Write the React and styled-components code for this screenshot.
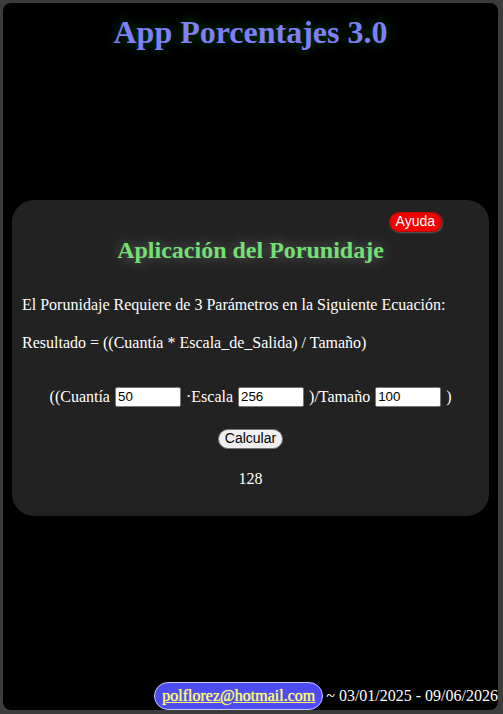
import React, { useState } from 'react';
import styled, { createGlobalStyle } from 'styled-components';

const GlobalStyle = createGlobalStyle`
  html, body {
    margin: 0;
    padding: 0;
    height: 100%;
    background: #3b3b3b;
  }
  body {
    font-family: "Liberation Serif", "Times New Roman", serif;
    color: #fff;
  }
`;

const Screen = styled.div`
  margin: 3px 5px 4px 3px;
  height: calc(100vh - 7px);
  background: #000;
  border-radius: 8px;
  display: grid;
  grid-template-rows: auto 1fr auto;
  overflow: hidden;
`;

const AppTitle = styled.h1`
  margin: 11px 0 0;
  text-align: center;
  font-size: 32px;
  line-height: 37px;
  font-weight: bold;
  color: #7f7ff7;
  text-shadow: 0 0 12px rgba(0, 140, 0, 0.55);
`;

const Main = styled.main`
  display: flex;
  align-items: center;
  padding: 0 9px 18px;
`;

const Card = styled.section`
  flex: 1;
  background: #222;
  border-radius: 22px;
  padding: 12px 10px 27px;
  text-align: center;
`;

const TopBar = styled.div`
  display: flex;
  justify-content: flex-end;
  padding-right: 37px;
  height: 20px;
`;

const HelpButton = styled.button`
  background: #f00000;
  color: #fff;
  border: 1px solid #b00;
  border-radius: 10px;
  font-family: "Liberation Sans", Arial, sans-serif;
  font-size: 14px;
  line-height: 17px;
  padding: 0 6px;
  height: 20px;
  box-shadow: 1px 1px 2px rgba(255, 255, 255, 0.25);
  cursor: pointer;
`;

const CardHeading = styled.h2`
  margin: 4px 0 0;
  font-size: 24px;
  line-height: 28px;
  font-weight: bold;
  color: #74e074;
  text-shadow: 0 0 14px rgba(255, 255, 255, 0.35);
`;

const Text = styled.p`
  margin: ${(p) => p.$top}px 0 0;
  text-align: left;
  font-size: 16px;
  line-height: 20px;
`;

const FormulaRow = styled.div`
  margin-top: 33px;
  display: flex;
  justify-content: center;
  align-items: center;
  gap: 5px;
  font-size: 16px;
  line-height: 22px;
`;

const NumberInput = styled.input`
  width: 60px;
  height: 16px;
  padding: 1px 2px;
  border: 1px solid #767676;
  border-radius: 2px;
  background: #fff;
  color: #000;
  font-family: "Liberation Sans", Arial, sans-serif;
  font-size: 13.33px;
`;

const CalcButton = styled.button`
  margin-top: 21px;
  height: 20px;
  padding: 0 6px;
  background: #efefef;
  color: #000;
  border: 1px solid #767676;
  border-radius: 10px;
  font-family: "Liberation Sans", Arial, sans-serif;
  font-size: 14px;
  line-height: 17px;
  cursor: pointer;
`;

const Result = styled.div`
  margin-top: 20px;
  font-size: 16px;
  line-height: 20px;
`;

const Footer = styled.footer`
  display: flex;
  justify-content: flex-end;
  align-items: center;
  gap: 3px;
  padding-bottom: 0;
  font-size: 16px;
`;

const MailPill = styled.a`
  display: inline-block;
  padding: 5px 7px;
  background: #4c4cf2;
  border: 1px solid #c9c9ff;
  border-radius: 14px;
  color: #ffff70;
  font-weight: normal;
  font-size: 16px;
  line-height: 16px;
  text-decoration: underline;
  text-shadow: 0 0 1px #ffff70;
`;

const Dates = styled.span`
  color: #fff;
  font-size: 16px;
`;

export default function App() {
  const [cuantia, setCuantia] = useState('50');
  const [escala, setEscala] = useState('256');
  const [tamano, setTamano] = useState('100');
  const [result, setResult] = useState(128);

  const calcular = () => {
    const r = (Number(cuantia) * Number(escala)) / Number(tamano);
    setResult(r);
  };

  return (
    <>
      <GlobalStyle />
      <Screen>
        <AppTitle>App Porcentajes 3.0</AppTitle>
        <Main>
          <Card>
            <TopBar>
              <HelpButton>Ayuda</HelpButton>
            </TopBar>
            <CardHeading>Aplicación del Porunidaje</CardHeading>
            <Text $top={31}>
              El Porunidaje Requiere de 3 Parámetros en la Siguiente Ecuación:
            </Text>
            <Text $top={18}>
              Resultado = ((Cuantía * Escala_de_Salida) / Tamaño)
            </Text>
            <FormulaRow>
              <span>((Cuantía</span>
              <NumberInput value={cuantia} onChange={(e) => setCuantia(e.target.value)} />
              <span>·Escala</span>
              <NumberInput value={escala} onChange={(e) => setEscala(e.target.value)} />
              <span>)/Tamaño</span>
              <NumberInput value={tamano} onChange={(e) => setTamano(e.target.value)} />
              <span>)</span>
            </FormulaRow>
            <CalcButton onClick={calcular}>Calcular</CalcButton>
            <Result>{result}</Result>
          </Card>
        </Main>
        <Footer>
          <MailPill href="mailto:polflorez@hotmail.com">polflorez@hotmail.com</MailPill>
          <Dates>~ 03/01/2025 - 09/06/2026</Dates>
        </Footer>
      </Screen>
    </>
  );
}
